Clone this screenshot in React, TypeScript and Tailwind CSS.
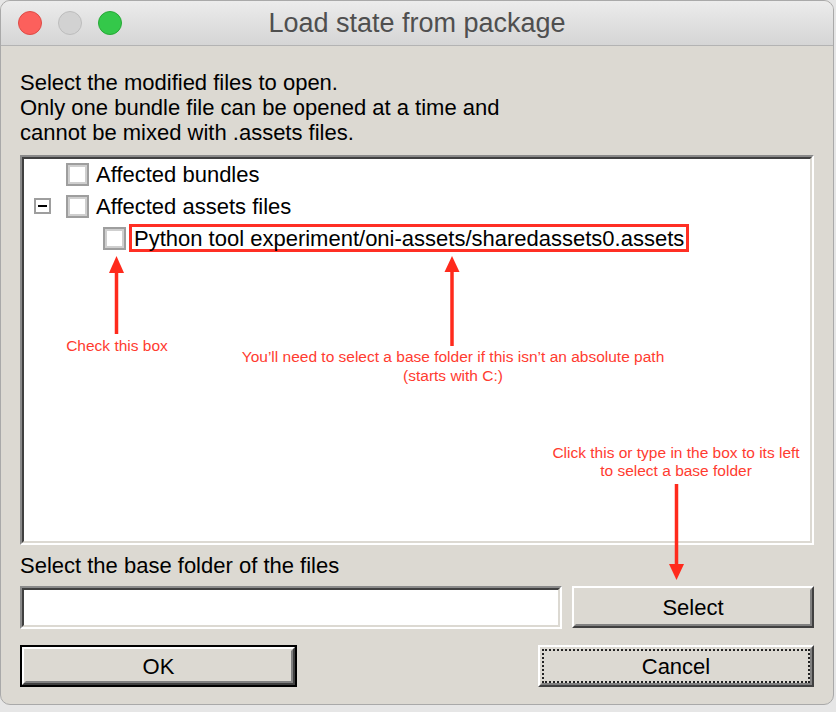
import React from "react"

const ui = { fontFamily: '"Liberation Sans", Arial, sans-serif' }
const note = { fontFamily: '"Liberation Sans", Helvetica, Arial, sans-serif' }

function Check() {
  return (
    <span className="w-[23px] h-[23px] shrink-0 border-2 border-[#9e9e9e] flex">
      <span className="flex-1 border-2 border-[#cfcfcf] bg-white" />
    </span>
  )
}

function Sunken({ className = "", children }: { className?: string; children?: React.ReactNode }) {
  return (
    <div className={`border-2 border-t-[#8a8a8a] border-l-[#8a8a8a] border-b-white border-r-white ${className}`}>
      <div className="h-full border-2 border-t-[#404040] border-l-[#404040] border-b-[#dcd9d2] border-r-[#dcd9d2] bg-white">
        {children}
      </div>
    </div>
  )
}

function Raised({ label, focus = false }: { label: string; focus?: boolean }) {
  return (
    <div className="h-full border-2 border-t-white border-l-white border-b-[#404040] border-r-[#404040]">
      <div className="h-full border-2 border-t-[#dcd9d2] border-l-[#dcd9d2] border-b-[#808080] border-r-[#808080] bg-[#dcd9d2]">
        <div className={`h-full flex items-center justify-center text-[22px] text-black ${focus ? "border-2 border-dotted border-[#222]" : ""}`}>
          {label}
        </div>
      </div>
    </div>
  )
}

export default function App() {
  return (
    <div className="w-[836px] h-[712px] bg-[#e6e6e6] overflow-hidden" style={ui}>
      <div className="relative w-[834px] h-[705px] rounded-[10px] overflow-hidden border border-[#a9a9a9] bg-[#dcd9d2] flex flex-col">
        {/* title bar */}
        <div className="h-[45px] shrink-0 relative flex items-center justify-center bg-gradient-to-b from-[#ececec] to-[#d5d5d5] border-b border-[#b3b3b3]">
          <div className="absolute left-[17px] top-[10px] flex gap-[16px]">
            <span className="w-[24px] h-[24px] rounded-full bg-[#fc605c] border border-[#de4b46]" />
            <span className="w-[24px] h-[24px] rounded-full bg-[#d2d2d2] border border-[#bdbdbd]" />
            <span className="w-[24px] h-[24px] rounded-full bg-[#34c84a] border border-[#27a836]" />
          </div>
          <span className="text-[27px] text-[#4f4f4f] leading-none" style={note}>Load state from package</span>
        </div>

        {/* body */}
        <div className="flex-1 flex flex-col px-[19px] pt-[24px] pb-[17px]">
          <div className="text-[22px] leading-[25px] text-black">
            <p>Select the modified files to open.</p>
            <p>Only one bundle file can be opened at a time and</p>
            <p>cannot be mixed with .assets files.</p>
          </div>

          <Sunken className="mt-[10px] h-[390px]">
            <div className="flex flex-col text-[22px] text-black -mt-[1px]">
              <div className="h-[32px] flex items-center pl-[42px] gap-[7px]">
                <Check />
                <span>Affected bundles</span>
              </div>
              <div className="h-[32px] flex items-center pl-[10px]">
                <span className="w-[17px] h-[16px] border-2 border-[#9e9e9e] bg-white flex items-center justify-center mr-[15px]">
                  <span className="w-[9px] h-[2px] bg-black" />
                </span>
                <Check />
                <span className="ml-[7px]">Affected assets files</span>
              </div>
              <div className="h-[32px] flex items-center pl-[79px]">
                <Check />
                <span className="ml-[3px] h-[28px] w-[560px] border-[3px] border-[#ff2f24] flex items-center pl-[2px] whitespace-nowrap">
                  Python tool experiment/oni-assets/sharedassets0.assets
                </span>
              </div>
            </div>
          </Sunken>

          <p className="mt-[8px] text-[22px] leading-[25px] text-black">Select the base folder of the files</p>

          <div className="mt-[8px] h-[43px] flex gap-[10px]">
            <Sunken className="w-[542px]" />
            <div className="flex-1 h-[42px]">
              <Raised label="Select" />
            </div>
          </div>

          <div className="mt-[16px] h-[42px] flex justify-between">
            <div className="w-[277px] border-2 border-black">
              <Raised label="OK" />
            </div>
            <div className="w-[276px]">
              <Raised label="Cancel" focus />
            </div>
          </div>
        </div>

        {/* annotations */}
        <svg className="absolute left-0 top-0 pointer-events-none" width="834" height="705">
          <g stroke="#ff2a1c" strokeWidth="3.5" fill="#ff2a1c">
            <line x1="115.5" y1="268" x2="115.5" y2="333" />
            <polygon points="115.5,255 108,272 123,272" stroke="none" />
            <line x1="451" y1="268" x2="451" y2="345" />
            <polygon points="451,255 443.5,271 458.5,271" stroke="none" />
            <line x1="675.5" y1="483" x2="675.5" y2="566" />
            <polygon points="675.5,579 668,563 683,563" stroke="none" />
          </g>
        </svg>
        <div className="absolute left-[116px] top-[336px] -translate-x-1/2 text-[15.5px] leading-[18px] text-[#ff3b30] whitespace-nowrap" style={note}>
          Check this box
        </div>
        <div className="absolute left-[452px] top-[346px] -translate-x-1/2 text-[15.5px] leading-[19px] text-[#ff3b30] whitespace-nowrap text-center" style={note}>
          <p>You’ll need to select a base folder if this isn’t an absolute path</p>
          <p>(starts with C:)</p>
        </div>
        <div className="absolute left-[675px] top-[443px] -translate-x-1/2 text-[15.5px] leading-[18px] text-[#ff3b30] whitespace-nowrap text-center" style={note}>
          <p>Click this or type in the box to its left</p>
          <p>to select a base folder</p>
        </div>
      </div>
    </div>
  )
}
